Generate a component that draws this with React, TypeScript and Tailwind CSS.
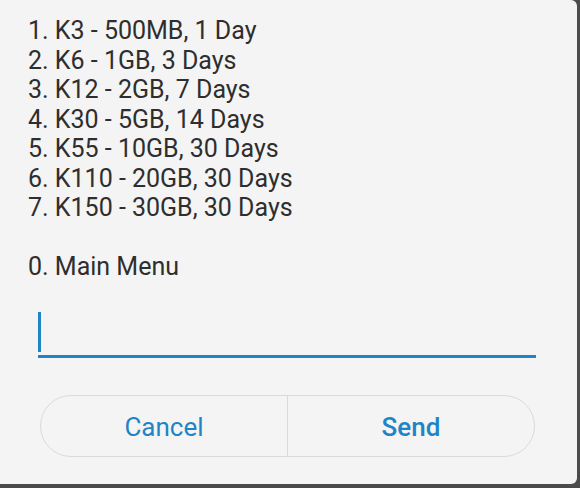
export default function App() {
    const options = [
        "1. K3 - 500MB, 1 Day",
        "2. K6 - 1GB, 3 Days",
        "3. K12 - 2GB, 7 Days",
        "4. K30 - 5GB, 14 Days",
        "5. K55 - 10GB, 30 Days",
        "6. K110 - 20GB, 30 Days",
        "7. K150 - 30GB, 30 Days",
    ];

    return (
        <main className="w-[580px] h-[488px] bg-[#4b4b4b] overflow-hidden" style={{ fontFamily: "Roboto, 'Noto Sans', sans-serif" }}>
            <div className="w-[577px] h-[484px] bg-[#f4f4f4] rounded-r-[6px] flex flex-col">
                <div className="pl-[28px] pt-[16px] text-[25px] leading-[29.5px] text-[#2e2e2e]">
                    {options.map((o) => (
                        <div key={o}>{o}</div>
                    ))}
                    <div className="h-[29.5px]" />
                    <div>0. Main Menu</div>
                </div>

                <div className="ml-[38px] w-[498px] mt-[30px] h-[46px] border-b-[3px] border-[#1f84c6] flex items-end">
                    <div className="w-[3px] h-[40px] mb-[3px] bg-[#1f84c6]" />
                </div>

                <div className="ml-[40px] w-[495px] mt-[37px] h-[62px] rounded-full border border-[#dadada] flex text-[26px] text-[#1f84c6]">
                    <button className="flex-1 flex items-center justify-center pt-[4px] border-r border-[#dadada]">Cancel</button>
                    <button className="flex-1 flex items-center justify-center pt-[4px] font-medium">Send</button>
                </div>
            </div>
        </main>
    );
}
